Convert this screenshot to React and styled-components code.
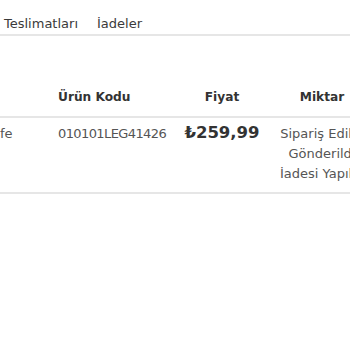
import React from "react";
import styled, { createGlobalStyle } from "styled-components";

const Global = createGlobalStyle`
  html, body { margin: 0; padding: 0; background: #fff; }
  body { font-family: "DejaVu Sans", "Noto Sans", sans-serif; overflow: hidden; width: 350px; }
`;

const Page = styled.div`
  width: 350px;
  overflow: hidden;
`;

const Tabs = styled.nav`
  display: flex;
  gap: 19px;
  padding: 14px 0 0 4px;
  border-bottom: 2px solid #e6e6e6;
`;

const Tab = styled.span`
  font-size: 13px;
  line-height: 20px;
  color: #3a3a3a;
  white-space: nowrap;
`;

const Table = styled.div`
  margin-top: 51px;
  width: 420px;
`;

const Row = styled.div`
  display: grid;
  grid-template-columns: 58px 122px 84px 116px;
  align-items: start;
  padding: ${(p) => (p.$head ? "0 0 9px" : "6px 0 8px")};
  border-bottom: 2px solid #e6e6e6;
`;

const HeadCell = styled.div`
  font-size: 12.2px;
  font-weight: 700;
  line-height: 20px;
  color: #333;
  text-align: ${(p) => p.$align || "left"};
  white-space: nowrap;
`;

const Cell = styled.div`
  font-size: 13px;
  line-height: 20px;
  color: #555;
  text-align: ${(p) => p.$align || "left"};
  white-space: nowrap;
  letter-spacing: ${(p) => p.$tight ? "-0.6px" : "0"};
`;

const Price = styled.div`
  font-size: 16.5px;
  font-weight: 700;
  line-height: 20px;
  color: #333;
  text-align: center;
  white-space: nowrap;
  margin-top: -1px;
`;

const Status = styled.div`
  display: flex;
  flex-direction: column;
  align-items: center;
  font-size: 13px;
  line-height: 20px;
  color: #555;
  white-space: nowrap;
`;

export default function App() {
  return (
    <Page>
      <Global />
      <Tabs>
        <Tab>Teslimatları</Tab>
        <Tab>İadeler</Tab>
      </Tabs>
      <Table>
        <Row $head>
          <HeadCell></HeadCell>
          <HeadCell>Ürün Kodu</HeadCell>
          <HeadCell $align="center">Fiyat</HeadCell>
          <HeadCell $align="center">Miktar</HeadCell>
        </Row>
        <Row>
          <Cell>fe</Cell>
          <Cell $tight>010101LEG41426</Cell>
          <Price>₺259,99</Price>
          <Status>
            <span>Sipariş Edildi</span>
            <span>Gönderildi</span>
            <span>İadesi Yapıldı</span>
          </Status>
        </Row>
      </Table>
    </Page>
  );
}
